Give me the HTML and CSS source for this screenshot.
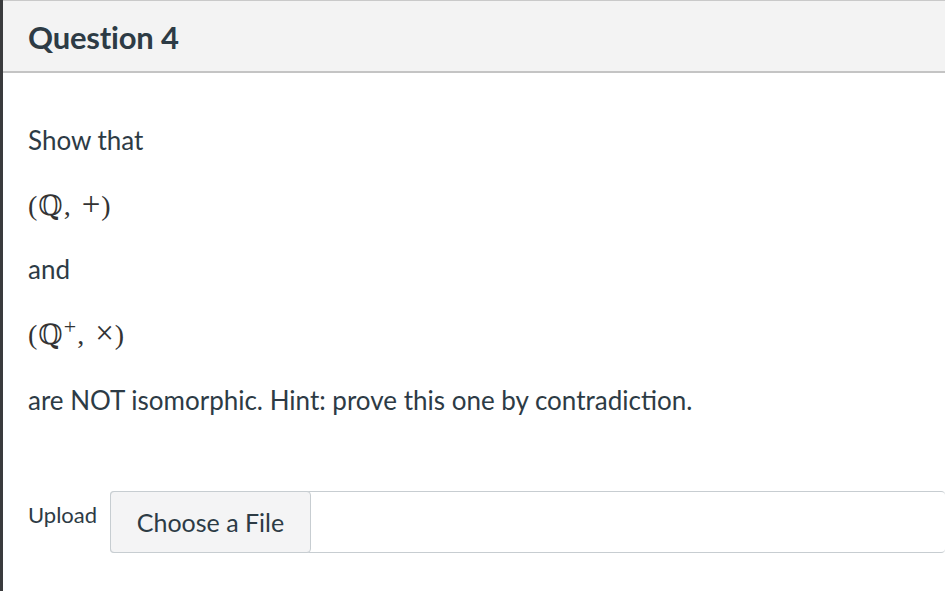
FILE: index.html
```html
<!DOCTYPE html>
<html>
<head>
<meta charset="utf-8">
<link rel="stylesheet" href="styles.css">
</head>
<body>
<div class="page">
  <div class="edge"></div>
  <div class="question">
    <div class="header"><h2 class="title">Question 4</h2></div>
    <div class="body">
      <p class="text l1">Show that</p>
      <p class="math l2">(ℚ, <span class="op">+</span>)</p>
      <p class="text l3">and</p>
      <p class="math l4">(ℚ<sup>+</sup>, <span class="op">×</span>)</p>
      <p class="text l5">are NOT isomorphic. Hint: prove this one by contradiction.</p>
      <div class="upload">
        <span class="label">Upload</span>
        <div class="file">
          <button class="choose">Choose a File</button>
          <div class="field"></div>
        </div>
      </div>
    </div>
  </div>
</div>
</body>
</html>
```
FILE: styles.css
```css
html, body {
  margin: 0;
  padding: 0;
  background: #fff;
}
.page {
  display: flex;
  width: 945px;
  height: 591px;
  overflow: hidden;
}
.edge {
  width: 3px;
  flex: none;
  background: #3a3b3d;
}
.question {
  flex: 1;
  font-family: Lato, "Open Sans", sans-serif;
  color: #2d3b45;
}
.header {
  height: 70px;
  background: #f3f3f3;
  border-top: 1px solid #c9c9c9;
  border-bottom: 2px solid #c4c4c4;
  display: flex;
  align-items: center;
  padding-left: 25px;
}
.title {
  margin: 2px 0 0 0;
  font-size: 31px;
  font-weight: 700;
  color: #2d3b45;
  letter-spacing: -0.2px;
}
.body {
  padding: 0 0 0 25px;
}
.body p {
  margin: 0;
}
.text {
  font-size: 26px;
  line-height: 30px;
  color: #2d3b45;
}
.math {
  font-family: "Liberation Serif", "DejaVu Serif", serif;
  font-size: 28px;
  line-height: 30px;
  color: #333;
  letter-spacing: 1px;
  word-spacing: 2px;
}
.op {
  font-size: 33px;
  line-height: 0;
}
.math sup {
  font-size: 22px;
  line-height: 0;
}
.l1 { margin-top: 52px !important; }
.l2 { margin-top: 36px !important; }
.l3 { margin-top: 33px !important; }
.l4 { margin-top: 36px !important; }
.l5 { margin-top: 35px !important; }
.upload {
  display: flex;
  align-items: flex-start;
  margin-top: 76px;
}
.label {
  font-size: 22px;
  width: 82px;
  flex: none;
  margin-top: 10px;
  color: #2d3b45;
}
.file {
  display: flex;
  flex: 1;
  height: 62px;
  box-sizing: border-box;
  border: 1px solid #c7cdd1;
  border-radius: 4px;
  border-right: none;
}
.choose {
  width: 201px;
  height: 62px;
  margin: -1px 0 0 -1px;
  box-sizing: border-box;
  background: #f4f4f5;
  border: 1px solid #c7cdd1;
  border-radius: 4px;
  font-family: Lato, "Open Sans", sans-serif;
  font-size: 25px;
  color: #2d3b45;
  padding: 0;
}
.field {
  flex: 1;
}
```
